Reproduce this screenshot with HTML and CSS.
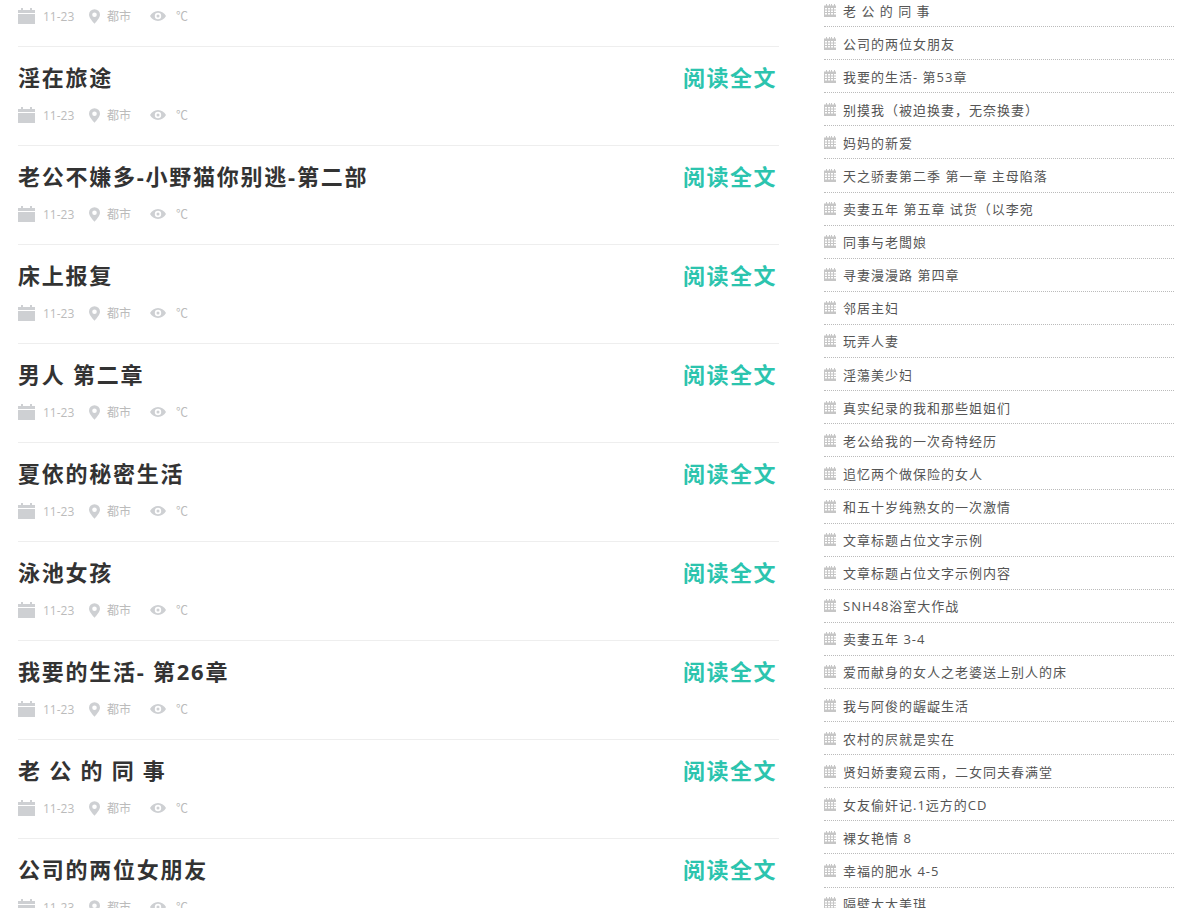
FILE: index.html
```html
<!DOCTYPE html>
<html lang="zh">
<head>
<meta charset="utf-8">
<title>文章列表</title>
<link rel="stylesheet" href="styles.css">
</head>
<body>
<svg class="defs" width="0" height="0" aria-hidden="true">
  <symbol id="cal" viewBox="0 0 17 16"><path d="M3 0h2v2h7V0h2v2h3v3H0V2h3zM0 6h17v10H0z"/></symbol>
  <symbol id="pin" viewBox="0 0 12 16"><path fill-rule="evenodd" d="M6 0a6 6 0 0 1 6 6c0 3-3.500 7-6 10C3.500 13 0 9 0 6a6 6 0 0 1 6-6zm0 3.500a2.500 2.500 0 1 0 0 5 2.500 2.500 0 0 0 0-5z"/></symbol>
  <symbol id="eye" viewBox="0 0 16 10"><path fill-rule="evenodd" d="M8 0c3.500 0 6.500 2.200 8 5-1.500 2.800-4.500 5-8 5S1.500 7.800 0 5c1.500-2.800 4.500-5 8-5zm0 1.800a3.200 3.200 0 1 0 0 6.400 3.200 3.200 0 0 0 0-6.400zM8 3.500a1.500 1.500 0 1 1 0 3 1.500 1.500 0 0 1 0-3z"/></symbol>
  <symbol id="grid" viewBox="0 0 13 13"><path d="M2 0h1v1.500h2V0h1v1.500h1V0h1v1.500h2V0h1v1.500h1V13H0V1.500h2zM1 4v1.500h2V4zm3 0v1.500h2V4zm3 0v1.500h2V4zm3 0v1.500h2V4zM1 6.500V8h2V6.500zm3 0V8h2V6.500zm3 0V8h2V6.500zm3 0V8h2V6.500zM1 9v1.500h2V9zm3 0v1.500h2V9zm3 0v1.500h2V9zm3 0v1.500h2V9z" fill-rule="evenodd"/></symbol>
</svg>
<div class="page">
  <main class="posts">
    <article class="post first">
      <div class="meta"><span class="m date"><svg class="i-cal"><use href="#cal"/></svg>11-23</span><span class="m loc"><svg class="i-pin"><use href="#pin"/></svg>都市</span><span class="m temp"><svg class="i-eye"><use href="#eye"/></svg>℃</span></div>
    </article>
    <article class="post">
      <div class="head"><h2>淫在旅途</h2><a class="more">阅读全文</a></div>
      <div class="meta"><span class="m date"><svg class="i-cal"><use href="#cal"/></svg>11-23</span><span class="m loc"><svg class="i-pin"><use href="#pin"/></svg>都市</span><span class="m temp"><svg class="i-eye"><use href="#eye"/></svg>℃</span></div>
    </article>
    <article class="post">
      <div class="head"><h2>老公不嫌多-小野猫你别逃-第二部</h2><a class="more">阅读全文</a></div>
      <div class="meta"><span class="m date"><svg class="i-cal"><use href="#cal"/></svg>11-23</span><span class="m loc"><svg class="i-pin"><use href="#pin"/></svg>都市</span><span class="m temp"><svg class="i-eye"><use href="#eye"/></svg>℃</span></div>
    </article>
    <article class="post">
      <div class="head"><h2>床上报复</h2><a class="more">阅读全文</a></div>
      <div class="meta"><span class="m date"><svg class="i-cal"><use href="#cal"/></svg>11-23</span><span class="m loc"><svg class="i-pin"><use href="#pin"/></svg>都市</span><span class="m temp"><svg class="i-eye"><use href="#eye"/></svg>℃</span></div>
    </article>
    <article class="post">
      <div class="head"><h2>男人 第二章</h2><a class="more">阅读全文</a></div>
      <div class="meta"><span class="m date"><svg class="i-cal"><use href="#cal"/></svg>11-23</span><span class="m loc"><svg class="i-pin"><use href="#pin"/></svg>都市</span><span class="m temp"><svg class="i-eye"><use href="#eye"/></svg>℃</span></div>
    </article>
    <article class="post">
      <div class="head"><h2>夏依的秘密生活</h2><a class="more">阅读全文</a></div>
      <div class="meta"><span class="m date"><svg class="i-cal"><use href="#cal"/></svg>11-23</span><span class="m loc"><svg class="i-pin"><use href="#pin"/></svg>都市</span><span class="m temp"><svg class="i-eye"><use href="#eye"/></svg>℃</span></div>
    </article>
    <article class="post">
      <div class="head"><h2>泳池女孩</h2><a class="more">阅读全文</a></div>
      <div class="meta"><span class="m date"><svg class="i-cal"><use href="#cal"/></svg>11-23</span><span class="m loc"><svg class="i-pin"><use href="#pin"/></svg>都市</span><span class="m temp"><svg class="i-eye"><use href="#eye"/></svg>℃</span></div>
    </article>
    <article class="post">
      <div class="head"><h2>我要的生活- 第26章</h2><a class="more">阅读全文</a></div>
      <div class="meta"><span class="m date"><svg class="i-cal"><use href="#cal"/></svg>11-23</span><span class="m loc"><svg class="i-pin"><use href="#pin"/></svg>都市</span><span class="m temp"><svg class="i-eye"><use href="#eye"/></svg>℃</span></div>
    </article>
    <article class="post">
      <div class="head"><h2>老 公 的 同 事</h2><a class="more">阅读全文</a></div>
      <div class="meta"><span class="m date"><svg class="i-cal"><use href="#cal"/></svg>11-23</span><span class="m loc"><svg class="i-pin"><use href="#pin"/></svg>都市</span><span class="m temp"><svg class="i-eye"><use href="#eye"/></svg>℃</span></div>
    </article>
    <article class="post">
      <div class="head"><h2>公司的两位女朋友</h2><a class="more">阅读全文</a></div>
      <div class="meta"><span class="m date"><svg class="i-cal"><use href="#cal"/></svg>11-23</span><span class="m loc"><svg class="i-pin"><use href="#pin"/></svg>都市</span><span class="m temp"><svg class="i-eye"><use href="#eye"/></svg>℃</span></div>
    </article>
  </main>
  <aside class="side">
    <ul>
      <li><svg><use href="#grid"/></svg>老 公 的 同 事</li>
      <li><svg><use href="#grid"/></svg>公司的两位女朋友</li>
      <li><svg><use href="#grid"/></svg>我要的生活- 第53章</li>
      <li><svg><use href="#grid"/></svg>别摸我（被迫换妻，无奈换妻）</li>
      <li><svg><use href="#grid"/></svg>妈妈的新爱</li>
      <li><svg><use href="#grid"/></svg>天之骄妻第二季 第一章 主母陷落</li>
      <li><svg><use href="#grid"/></svg>卖妻五年 第五章 试货（以李宛</li>
      <li><svg><use href="#grid"/></svg>同事与老闆娘</li>
      <li><svg><use href="#grid"/></svg>寻妻漫漫路 第四章</li>
      <li><svg><use href="#grid"/></svg>邻居主妇</li>
      <li><svg><use href="#grid"/></svg>玩弄人妻</li>
      <li><svg><use href="#grid"/></svg>淫蕩美少妇</li>
      <li><svg><use href="#grid"/></svg>真实纪录的我和那些姐姐们</li>
      <li><svg><use href="#grid"/></svg>老公给我的一次奇特经历</li>
      <li><svg><use href="#grid"/></svg>追忆两个做保险的女人</li>
      <li><svg><use href="#grid"/></svg>和五十岁纯熟女的一次激情</li>
      <li><svg><use href="#grid"/></svg>文章标题占位文字示例</li>
      <li><svg><use href="#grid"/></svg>文章标题占位文字示例内容</li>
      <li><svg><use href="#grid"/></svg>SNH48浴室大作战</li>
      <li><svg><use href="#grid"/></svg>卖妻五年 3-4</li>
      <li><svg><use href="#grid"/></svg>爱而献身的女人之老婆送上别人的床</li>
      <li><svg><use href="#grid"/></svg>我与阿俊的龌龊生活</li>
      <li><svg><use href="#grid"/></svg>农村的屄就是实在</li>
      <li><svg><use href="#grid"/></svg>贤妇娇妻窥云雨，二女同夫春满堂</li>
      <li><svg><use href="#grid"/></svg>女友偷奸记.1远方的CD</li>
      <li><svg><use href="#grid"/></svg>裸女艳情 8</li>
      <li><svg><use href="#grid"/></svg>幸福的肥水 4-5</li>
      <li><svg><use href="#grid"/></svg>隔壁太太美琪</li>
    </ul>
  </aside>
</div>
</body>
</html>
```
FILE: styles.css
```css
* { box-sizing: border-box; }
html, body { margin: 0; height: 908px; overflow: hidden; background: #fff; }
body { font-family: "Open Sans", "Noto Sans CJK SC", sans-serif; color: #333; }
.defs { position: absolute; }
.page { display: flex; align-items: flex-start; padding-left: 18px; }
.posts { width: 761px; padding-top: 6px; flex: none; }
.post { border-bottom: 1px solid #eeeeee; padding: 15px 0 20px; }
.post.first { padding-top: 0; }
.head { display: flex; justify-content: space-between; align-items: center; height: 30px; padding-right: 2px; margin-bottom: 13px; }
h2 { margin: 0; font-size: 22px; font-weight: 700; letter-spacing: 1.75px; line-height: 30px; color: #333; white-space: pre; }
.more { font-size: 22px; font-weight: 700; letter-spacing: 1.5px; line-height: 30px; color: #2cc4ae; }
.meta { display: flex; align-items: center; height: 20px; font-size: 12px; color: #bbb; }
.m { display: flex; align-items: center; }
.meta svg { fill: #ced0d3; flex: none; }
.i-cal { width: 17px; height: 16px; margin-right: 8px; }
.i-pin { width: 11px; height: 15px; margin-right: 7px; }
.i-eye { width: 16px; height: 10px; margin-right: 10px; }
.date { width: 71px; }
.loc { width: 61px; }
.side { width: 350px; margin-left: 45px; margin-top: -6px; flex: none; }
.side ul { list-style: none; margin: 0; padding: 0; }
.side li { display: flex; align-items: center; height: 33.1px; border-bottom: 1px dotted #bbb; font-size: 13px; letter-spacing: 1px; color: #555; white-space: pre; }
.side svg { width: 13px; height: 13px; margin-right: 6px; fill: #c6c6c6; flex: none; }
```
